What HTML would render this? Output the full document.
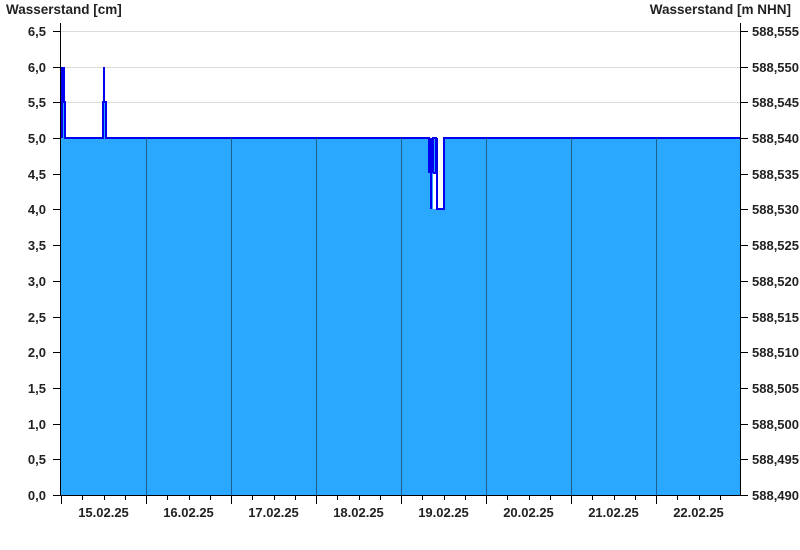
<!DOCTYPE html>
<html><head><meta charset="utf-8"><style>
html,body{margin:0;padding:0;background:#fff;}
svg{display:block;font-family:"Liberation Sans",Arial,sans-serif;font-weight:bold;font-size:13px;fill:#222;}
</style></head><body>
<svg width="800" height="550" viewBox="0 0 800 550" xmlns="http://www.w3.org/2000/svg">
<text x="6" y="14" font-size="13.5">Wasserstand [cm]</text>
<text x="791" y="14" font-size="13.5" text-anchor="end">Wasserstand [m NHN]</text>
<g stroke="#dcdcdc" stroke-width="1">
<line x1="61" y1="31.5" x2="740" y2="31.5"/>
<line x1="61" y1="67.5" x2="740" y2="67.5"/>
<line x1="61" y1="102.5" x2="740" y2="102.5"/>
</g>
<path d="M61,138 L61,102 L65,102 L65,138 L103,138 L103,102 L106,102 L106,138 L430,138 L430,495 L61,495Z M432,138 L436,138 L436,173 L432,173Z M445,138 L740,138 L740,495 L430,495 L430,209 L432,209 L432,173 L436,173 L436,138 L437,138 L437,209 L445,209Z" fill="#2aa7ff"/>
<rect x="430" y="173" width="7" height="322" fill="#2aa7ff"/>
<rect x="431" y="173" width="1" height="36" fill="#fff"/>
<rect x="433" y="173" width="4" height="36" fill="#fff"/>
<g stroke="#0000ee" stroke-width="2" fill="none" shape-rendering="crispEdges">
<path d="M62,67 L62,138 M64,67 L64,102 L65,102 L65,138 L103,138 L103,102 L104,102 L104,67 M104,102 L106,102 L106,138 L429,138 L429,173"/>
<path d="M431,138 L431,209"/>
<path d="M433,173 L433,138 L436,138 L436,173 L433,173"/>
<path d="M437,138 L437,209 L444,209 L444,138 L740,138"/>
</g>
<g stroke="#1f5f8f" stroke-width="1">
<line x1="146.5" y1="138" x2="146.5" y2="495"/>
<line x1="231.5" y1="138" x2="231.5" y2="495"/>
<line x1="316.5" y1="138" x2="316.5" y2="495"/>
<line x1="401.5" y1="138" x2="401.5" y2="495"/>
<line x1="486.5" y1="138" x2="486.5" y2="495"/>
<line x1="571.5" y1="138" x2="571.5" y2="495"/>
<line x1="656.5" y1="138" x2="656.5" y2="495"/>
</g>
<g stroke="#000" stroke-width="1">
<line x1="60.5" y1="23" x2="60.5" y2="495"/>
<line x1="740.5" y1="23" x2="740.5" y2="495"/>
<line x1="60" y1="495.5" x2="741" y2="495.5"/>
</g>
<g stroke="#000" stroke-width="1" id="ticks"></g>
<g id="ylab" text-anchor="end"></g>
<g id="rlab"></g>
<g id="xlab" text-anchor="middle"></g>
</svg>
<script>
var ns="http://www.w3.org/2000/svg";
function el(p,t,a,txt){var e=document.createElementNS(ns,t);for(var k in a)e.setAttribute(k,a[k]);if(txt)e.textContent=txt;document.getElementById(p).appendChild(e);}
var L=["0,0","0,5","1,0","1,5","2,0","2,5","3,0","3,5","4,0","4,5","5,0","5,5","6,0","6,5"];
for(var i=0;i<14;i++){var y=Math.round(495-i*35.69)+0.5;
el("ticks","line",{x1:53,y1:y,x2:61,y2:y});el("ticks","line",{x1:740,y1:y,x2:748,y2:y});
el("ylab","text",{x:46,y:y+4.5},L[i]);
var r=(588.490+i*0.005).toFixed(3).replace(".",",");
el("rlab","text",{x:752,y:y+4.5},r);}
var D=["15.02.25","16.02.25","17.02.25","18.02.25","19.02.25","20.02.25","21.02.25","22.02.25"];
for(var d=0;d<8;d++){var x0=61+d*85;
for(var q=0;q<4;q++){var x=Math.round(x0+q*21.25)+0.5;el("ticks","line",{x1:x,y1:495,x2:x,y2:q==0?504:500});}
el("xlab","text",{x:x0+42.5,y:517},D[d]);}
</script>
</body></html>
